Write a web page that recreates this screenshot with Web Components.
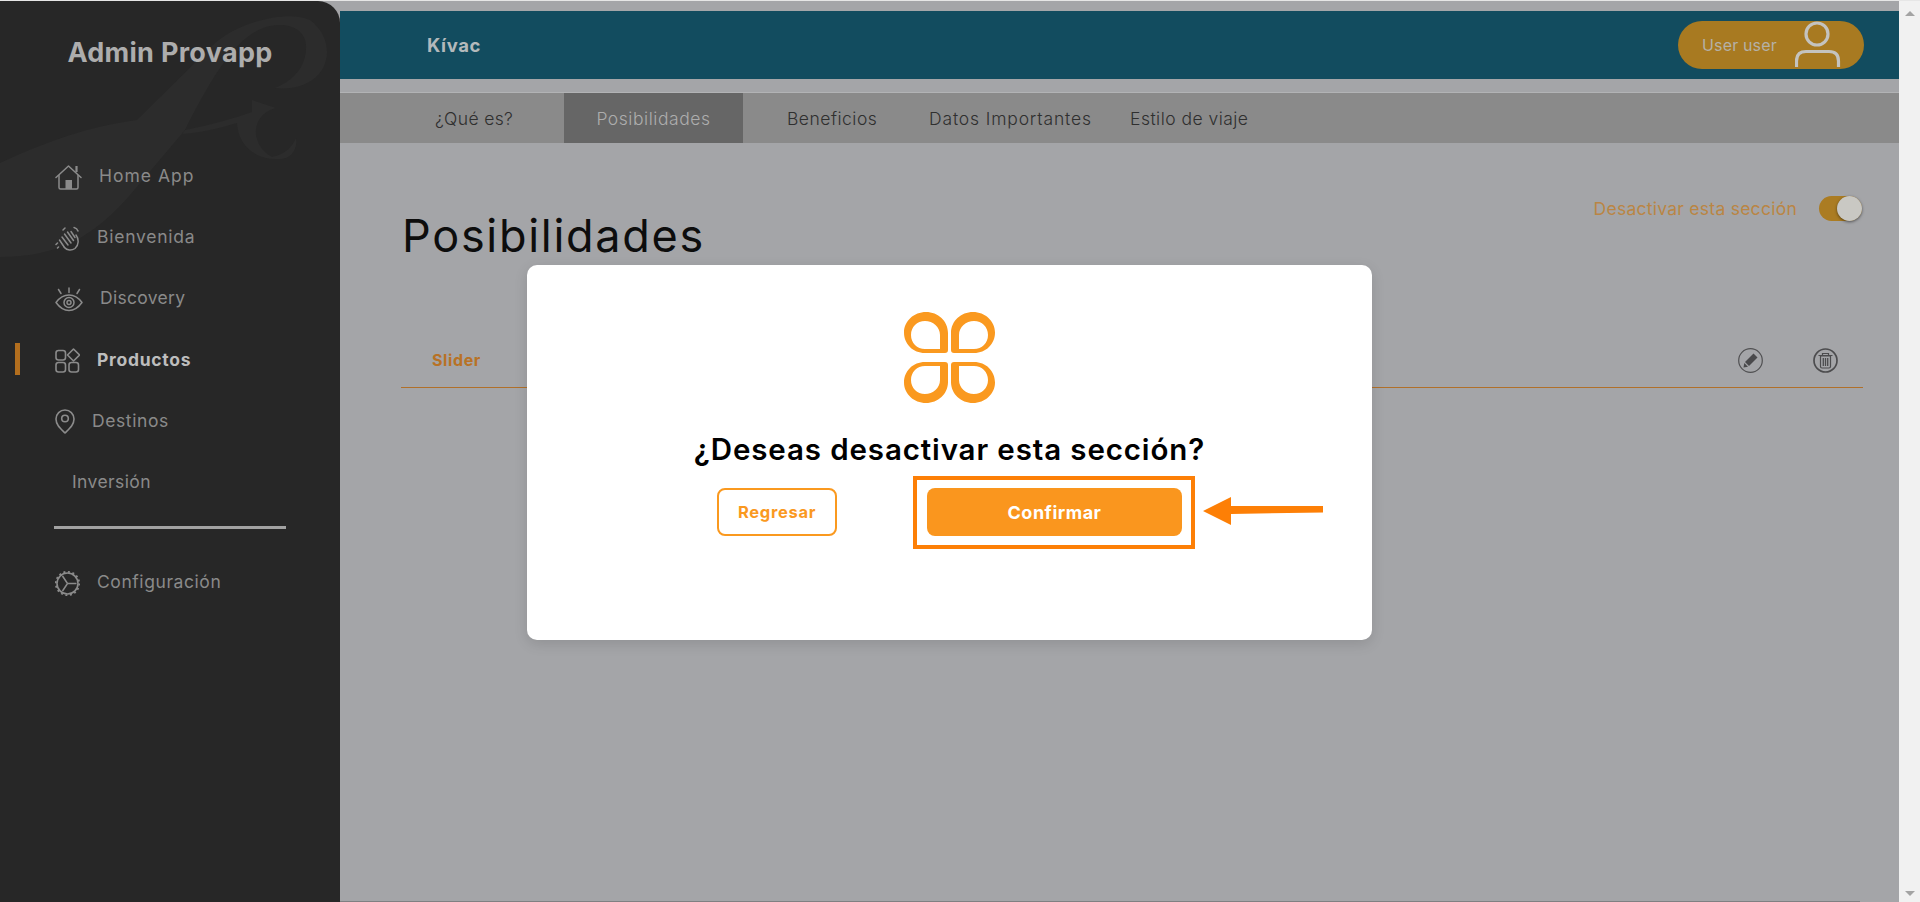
<!DOCTYPE html>
<html lang="es">
<head>
<meta charset="utf-8">
<title>Admin Provapp</title>
<style>
    html, body { margin: 0; height: 100%; overflow: hidden; }
    body { background: #a4a5a8; font-family: Inter, "Liberation Sans", sans-serif; }
    app-shell { height: 902px; }
</style>
</head>
<body>
<app-shell>
    <admin-sidebar slot="sidebar" titulo="Admin Provapp">
        <side-item ls="1">
            <svg slot="icon" width="27" height="25" viewBox="0 0 27 25" fill="none" stroke="#8b8b8b" stroke-width="1.5" stroke-linecap="round" stroke-linejoin="round"><path d="M1 12.5 13.5 1 26 12.5"/><path d="M21.5 7V1"  stroke-width="2.2" stroke-linecap="butt"/><path d="M4 10.5V22.5q0 1.5 1.5 1.5h16q1.5 0 1.5-1.5V10.5"/><rect x="10.5" y="15" width="6.5" height="9" fill="#8b8b8b" stroke="none"/></svg>
            Home App
        </side-item>
        <side-item ls=".75">
            <svg slot="icon" width="25" height="25" viewBox="0 0 25 25" fill="none" stroke="#8b8b8b" stroke-width="1.5" stroke-linecap="round" stroke-linejoin="round"><path d="M21 9c3 4 3 10-1 13.5-3.5 2.5-8 2-10.5-1"/><path d="M9.5 21.5 4.5 14"/><path d="M7 11 13 19M9.5 8l6.5 9M12.5 6l6 8.5M16 5.5l4 6"/><path d="M1 18.5l1.5-1.5M3.5 21l-1 1"/><path d="M19 1.5c2 .5 3.5 2 4 3.5"/><path d="M8 4l2-2"/></svg>
            Bienvenida
        </side-item>
        <side-item ls=".3">
            <svg slot="icon" width="28" height="25" viewBox="0 0 28 25" fill="none" stroke="#8b8b8b" stroke-width="1.5" stroke-linecap="round" stroke-linejoin="round"><path d="M1 15.5C5 10 9.5 8 14 8s9 2 13 7.5C23 21 18.5 23.5 14 23.5S5 21 1 15.5Z"/><circle cx="14" cy="15.5" r="5"/><circle cx="14" cy="15.5" r="2"/><path d="M14 1v4.5M3.5 2.5 6 6.5M24.5 2.5 22 6.5"/></svg>
            Discovery
        </side-item>
        <side-item active ls=".73">
            <svg slot="icon" width="25" height="25" viewBox="0 0 25 25" fill="none" stroke="#8b8b8b" stroke-width="1.6" stroke-linejoin="round"><rect x="1" y="2.5" width="9.5" height="9.5" rx="2.5"/><rect x="1" y="14.5" width="9.5" height="9.5" rx="2.5"/><rect x="14" y="14.5" width="9.5" height="9.5" rx="2.5"/><path d="M18.5 1 24.5 7 18.5 13 12.5 7Z"/></svg>
            Productos
        </side-item>
        <side-item ls=".6">
            <svg slot="icon" width="20" height="25" viewBox="0 0 20 25" fill="none" stroke="#8b8b8b" stroke-width="1.6" stroke-linejoin="round"><path d="M10 24C5 19 1 15.5 1 10a9 9 0 0 1 18 0C19 15.5 15 19 10 24Z"/><circle cx="10" cy="9.5" r="3.3"/></svg>
            Destinos
        </side-item>
        <side-item ls=".4">Inversión</side-item>
        <side-item slot="config" ls=".57">
            <svg slot="icon" width="25" height="27" viewBox="0 0 25 27" fill="none" stroke="#8b8b8b" stroke-linejoin="round"><circle cx="12.5" cy="13.5" r="10.5" stroke-width="1.6"/><circle cx="12.5" cy="13.5" r="11.7" stroke-width="1.8" stroke-dasharray="2 2.6"/><path d="M12.5 13.5H21.5M12.5 13.5 7.5 6M12.5 13.5 7.5 21" stroke-width="1.5"/></svg>
            Configuración
        </side-item>
    </admin-sidebar>

    <top-bar slot="top" producto="Kívac" usuario="User user"></top-bar>
    <tab-bar slot="top">
        <tab-item ancho="224" pad="95" ls=".35" texto="¿Qué es?"></tab-item>
        <tab-item ancho="179" ls=".55" texto="Posibilidades" activo></tab-item>
        <tab-item ancho="142" pad="44" ls=".5" texto="Beneficios"></tab-item>
        <tab-item ancho="201" pad="44" ls=".85" texto="Datos Importantes"></tab-item>
        <tab-item ancho="170" pad="44" ls=".47" texto="Estilo de viaje"></tab-item>
    </tab-bar>
    <section-view titulo="Posibilidades" slot="top">
        <list-row texto="Slider"></list-row>
    </section-view>
    <confirm-modal slot="modal" pregunta="¿Deseas desactivar esta sección?"></confirm-modal>
</app-shell>

<script>
class AppShell extends HTMLElement {
    constructor() {
        super();
        this.attachShadow({ mode: 'open' });
        this.shadowRoot.innerHTML = `
        <style>
            :host { display: flex; flex-direction: column; width: 1920px; position: relative; overflow: hidden; }
            .tope { height: 1px; background: #e6e6e6; flex: none; }
            .fila { display: flex; flex: 1; min-height: 0; }
            .lateral { flex: none; width: 340px; display: flex; }
            main { flex: 1; min-width: 0; display: flex; flex-direction: column; padding-top: 10px; position: relative; }
            .contenido { flex: 1; display: flex; flex-direction: column; }
            .hbar { flex: none; height: 1px; background: #7f8082; margin-right: 39px; }
            .rail { flex: none; width: 21px; background: #f1f1f1; display: flex; flex-direction: column; justify-content: space-between; align-items: center; padding: 10px 0 6px; box-sizing: border-box; }
            .up { width: 0; height: 0; border: 5px solid transparent; border-top: 0; border-bottom: 5px solid #a3a3a3; }
            .down { width: 0; height: 0; border: 5px solid transparent; border-bottom: 0; border-top: 5px solid #a3a3a3; }
            .capa { position: absolute; left: 0; top: 0; right: 21px; bottom: 0; padding-top: 3px; display: flex; align-items: center; justify-content: center; }
        </style>
        <div class="tope"></div>
        <div class="fila">
            <div class="lateral"><slot name="sidebar"></slot></div>
            <main>
                <div class="contenido"><slot name="top"></slot></div>
                <div class="hbar"></div>
            </main>
            <div class="rail"><span class="up"></span><span class="down"></span></div>
        </div>
        <div class="capa"><slot name="modal"></slot></div>
        `;
    }
}

class AdminSidebar extends HTMLElement {
    constructor() {
        super();
        this.attachShadow({ mode: 'open' });
        this.shadowRoot.innerHTML = `
        <style>
            :host { display: flex; flex-direction: column; width: 340px; background: #272727; border-radius: 0 22px 0 0; position: relative; overflow: hidden; box-sizing: border-box; }
            .marca { position: absolute; left: 0; top: 0; }
            h1 { position: relative; margin: 37px 0 0; height: 30px; line-height: 30px; font-size: 27px; font-weight: 700; color: #adadad; text-align: center; letter-spacing: .3px; }
            nav { position: relative; margin-top: 77px; display: flex; flex-direction: column; }
            .raya { margin: 13.8px 0 0 54px; width: 232px; height: 3px; background: #a2a2a2; }
            .config { margin-top: 22px; display: flex; flex-direction: column; }
        </style>
        <svg class="marca" width="340" height="300" viewBox="0 1 340 300" fill="#2c2c2c">
            <path d="M0 163C60 135 100 125 137 120L213 45C240 20 290 10 310 20 330 35 332 60 318 75 308 86 290 90 275 88 295 80 307 65 306 45 305 30 290 22 270 26 240 32 215 70 185 130L130 195C95 235 60 257 0 257Z"/>
            <path d="M185 130C210 125 235 118 252 112L252 100 276 108C260 112 255 125 256 135 258 148 268 155 272 157 283 155 292 148 296 138 298 150 290 160 278 159 255 160 238 145 237 123 220 128 200 133 182 134Z"/>
        </svg>
        <h1>${this.getAttribute('titulo')}</h1>
        <nav>
            <slot></slot>
            <div class="raya"></div>
            <div class="config"><slot name="config"></slot></div>
        </nav>
        `;
    }
}

class SideItem extends HTMLElement {
    constructor() {
        super();
        this.attachShadow({ mode: 'open' });
        const activo = this.hasAttribute('active');
        this.shadowRoot.innerHTML = `
        <style>
            :host { display: flex; align-items: center; height: 61.2px; font-size: 17.5px; letter-spacing: ${this.getAttribute('ls') || 0}px; color: ${activo ? '#bdbdbd' : '#8a8a8a'}; font-weight: ${activo ? 700 : 400}; }
            .marca { flex: none; width: 5px; height: 32px; margin: 0 35px 0 15px; background: ${activo ? '#b26e1e' : 'transparent'}; }
            .icono { display: flex; align-items: center; margin: 3px 17px 0 0; }
            ::slotted(svg) { display: block; }
        </style>
        <span class="marca"></span>
        <span class="icono"><slot name="icon"></slot></span>
        <slot></slot>
        `;
    }
}

class TopBar extends HTMLElement {
    constructor() {
        super();
        this.attachShadow({ mode: 'open' });
        this.shadowRoot.innerHTML = `
        <style>
            :host { display: flex; align-items: center; justify-content: space-between; height: 68px; background: #124c5f; padding: 0 35px 0 87px; flex: none; }
            b { font-size: 18.5px; font-weight: 700; color: #b3b9bb; letter-spacing: .6px; }
            .pill { display: flex; align-items: center; width: 186px; height: 48px; border-radius: 24px; background: #a87a21; box-sizing: border-box; padding-left: 24px; position: relative; }
            .pill span { font-size: 16px; color: #b5b1a7; width: 93px; letter-spacing: .15px; }
            svg { display: block; }
        </style>
        <b>${this.getAttribute('producto')}</b>
        <div class="pill">
            <span>${this.getAttribute('usuario')}</span>
            <svg width="47" height="48" viewBox="0 0 47 48" fill="none" stroke="#c4c3bf" stroke-width="3.2"><circle cx="22" cy="13" r="11"/><path d="M1.5 46V40Q1.5 30.5 11 30.5H34Q43.5 30.5 43.5 40V46"/></svg>
        </div>
        `;
    }
}

class TabBar extends HTMLElement {
    constructor() {
        super();
        this.attachShadow({ mode: 'open' });
        this.shadowRoot.innerHTML = `
        <style>
            :host { display: flex; flex: none; height: 50px; background: #8a8a8a; margin-top: 13px; border-top: 1px solid #b2b3b5; }
        </style>
        <slot></slot>
        `;
    }
}

class TabItem extends HTMLElement {
    constructor() {
        super();
        this.attachShadow({ mode: 'open' });
        const activo = this.hasAttribute('activo');
        this.shadowRoot.innerHTML = `
        <style>
            :host { display: flex; align-items: center; justify-content: ${activo ? 'center' : 'flex-start'}; box-sizing: border-box; height: 50px; width: ${this.getAttribute('ancho')}px; flex: none; white-space: nowrap;
                padding-left: ${this.getAttribute('pad') || 0}px; font-size: 17.5px; font-weight: 300; letter-spacing: ${this.getAttribute('ls')}px;
                color: ${activo ? '#adadad' : '#2f2f2f'}; background: ${activo ? '#666666' : 'transparent'}; }
        </style>
        <span>${this.getAttribute('texto')}</span>
        `;
    }
}

class SectionView extends HTMLElement {
    constructor() {
        super();
        this.attachShadow({ mode: 'open' });
        this.shadowRoot.innerHTML = `
        <style>
            :host { display: block; padding: 53px 36px 0 61px; flex: 1; }
            .cabeza { display: flex; justify-content: space-between; align-items: flex-start; }
            h2 { margin: 15px 0 0 1px; font-size: 45px; line-height: 50px; font-weight: 400; color: #0d0d0d; letter-spacing: 1.7px; }
            .estado { display: flex; align-items: center; gap: 22px; height: 25px; margin-right: 1px; font-size: 17.5px; color: #ba8544; letter-spacing: .26px; }
            .lista { margin-top: 72px; }
        </style>
        <div class="cabeza">
            <h2>${this.getAttribute('titulo')}</h2>
            <div class="estado">Desactivar esta sección <toggle-switch></toggle-switch></div>
        </div>
        <div class="lista"><slot></slot></div>
        `;
    }
}

class ToggleSwitch extends HTMLElement {
    constructor() {
        super();
        this.attachShadow({ mode: 'open' });
        this.shadowRoot.innerHTML = `
        <style>
            :host { display: flex; justify-content: flex-end; align-items: center; width: 43px; height: 25px; border-radius: 13px; background: #ab7c22; }
            i { display: block; width: 25px; height: 25px; border-radius: 50%; background: #c9c8c3; box-shadow: 0 1px 3px rgba(0,0,0,.5); }
        </style>
        <i></i>
        `;
    }
}

class ListRow extends HTMLElement {
    constructor() {
        super();
        this.attachShadow({ mode: 'open' });
        this.shadowRoot.innerHTML = `
        <style>
            :host { display: flex; align-items: center; justify-content: space-between; box-sizing: border-box; height: 55px; padding: 0 25px 0 31px; border-bottom: 1px solid #b0702a; }
            b { font-size: 16px; font-weight: 700; color: #b87225; letter-spacing: .6px; }
            .acciones { display: flex; gap: 50px; }
            svg { display: block; }
        </style>
        <b>${this.getAttribute('texto')}</b>
        <div class="acciones">
            <svg width="25" height="25" viewBox="0 0 25 25"><circle cx="12.5" cy="12.5" r="11.8" fill="none" stroke="#505052" stroke-width="1.2"/><path d="M15.5 5.5 19.5 9.5 11 18 7 14Z" fill="#4a4a4c"/><path d="M6.3 15 10 18.7 5.5 19.5Z" fill="#4a4a4c"/></svg>
            <svg width="25" height="25" viewBox="0 0 25 25" fill="none" stroke="#4c4c4e"><circle cx="12.5" cy="12.5" r="11.5" stroke-width="1.7"/><path d="M5.5 7.5H19.5M9.5 7.5V5.5H15.5V7.5" stroke-width="1.2"/><path d="M7.5 8H17.5V18.5Q17.5 20 16 20H9Q7.5 20 7.5 18.5Z" stroke-width="1.2"/><path d="M10.3 10V18M12.5 10V18M14.7 10V18" stroke-width="1.3"/></svg>
        </div>
        `;
    }
}

class ConfirmModal extends HTMLElement {
    constructor() {
        super();
        this.attachShadow({ mode: 'open' });
        this.shadowRoot.innerHTML = `
        <style>
            :host { display: block; position: relative; width: 845px; height: 375px; box-sizing: border-box; padding-top: 47px; background: #fff; border-radius: 10px; box-shadow: 0 4px 14px rgba(0,0,0,.12); }
            svg { display: block; }
            .logo { margin: 0 auto; }
            h3 { margin: 28px 0 0; height: 36px; line-height: 36px; text-align: center; font-size: 29.5px; font-weight: 600; color: #000; letter-spacing: .88px; }
            .botones { display: flex; gap: 90px; margin-top: 21px; padding-left: 190px; }
            button { font: 700 16.5px Inter, "Liberation Sans", sans-serif; letter-spacing: .7px; height: 48px; border-radius: 8px; padding: 0; box-sizing: border-box; }
            .volver { width: 120px; background: #fff; border: 2px solid #fa991f; color: #fa991f; }
            .ok { width: 255px; background: #fa961e; border: 0; color: #fff; font-size: 18px; letter-spacing: .5px; }
            .marco { position: absolute; left: 386px; top: 211px; width: 282px; height: 73px; box-sizing: border-box; border: 4px solid #fd7f06; }
            .flecha { position: absolute; left: 676px; top: 232px; }
        </style>
        <svg class="logo" width="91" height="91" viewBox="0 0 91 91" fill="#fa991f">
            <defs><path id="p" fill-rule="evenodd" d="M22 0C34 0 44 9 44 21V38Q44 41 41 41H21C9 41 0 32 0 20.5 0 9 10 0 22 0ZM21 9C13 9 7 15 7 23 7 31 13 37 21 37H36V23C36 15 29 9 21 9Z"/></defs>
            <use href="#p"/>
            <use href="#p" transform="translate(91 0) scale(-1 1)"/>
            <use href="#p" transform="translate(0 91) scale(1 -1)"/>
            <use href="#p" transform="translate(91 91) scale(-1 -1)"/>
        </svg>
        <h3>${this.getAttribute('pregunta')}</h3>
        <div class="botones">
            <button class="volver">Regresar</button>
            <button class="ok">Confirmar</button>
        </div>
        <div class="marco"></div>
        <svg class="flecha" width="122" height="30" viewBox="0 0 122 30"><path d="M0 14 28 0V9L120 9V15.5L28 17V28Z" fill="#fd7f06"/></svg>
        `;
    }
}

customElements.define('app-shell', AppShell);
customElements.define('admin-sidebar', AdminSidebar);
customElements.define('side-item', SideItem);
customElements.define('top-bar', TopBar);
customElements.define('tab-bar', TabBar);
customElements.define('tab-item', TabItem);
customElements.define('section-view', SectionView);
customElements.define('toggle-switch', ToggleSwitch);
customElements.define('list-row', ListRow);
customElements.define('confirm-modal', ConfirmModal);
</script>
</body>
</html>
